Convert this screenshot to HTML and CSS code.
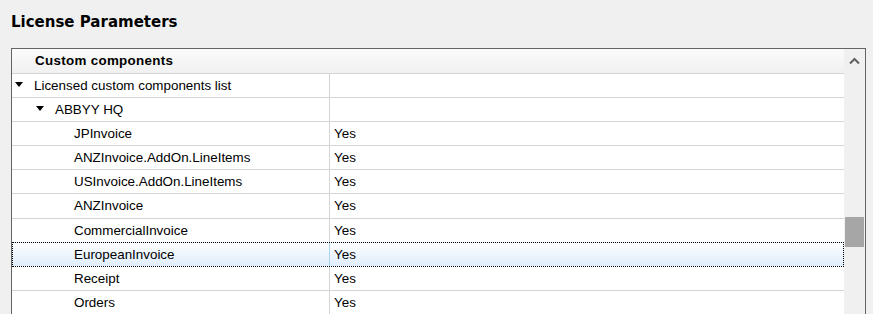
FILE: index.html
```html
<!DOCTYPE html>
<html lang="en">
<head>
  <meta charset="UTF-8" />
  <title>License Parameters</title>
  <link rel="stylesheet" href="styles.css">
</head>
<body>
  <h1>License Parameters</h1>

  <div class="grid-panel">
    <div class="rows">
      <div class="row header">Custom components</div>

      <div class="row">
        <div class="name level-0"><span class="tri"></span>Licensed custom components list</div>
        <div class="value"></div>
      </div>
      <div class="row">
        <div class="name level-1"><span class="tri"></span>ABBYY HQ</div>
        <div class="value"></div>
      </div>
      <div class="row">
        <div class="name level-2">JPInvoice</div>
        <div class="value">Yes</div>
      </div>
      <div class="row">
        <div class="name level-2">ANZInvoice.AddOn.LineItems</div>
        <div class="value">Yes</div>
      </div>
      <div class="row">
        <div class="name level-2">USInvoice.AddOn.LineItems</div>
        <div class="value">Yes</div>
      </div>
      <div class="row tall">
        <div class="name level-2">ANZInvoice</div>
        <div class="value">Yes</div>
      </div>
      <div class="row">
        <div class="name level-2">CommercialInvoice</div>
        <div class="value">Yes</div>
      </div>
      <div class="row selected">
        <div class="name level-2">EuropeanInvoice</div>
        <div class="value">Yes</div>
      </div>
      <div class="row">
        <div class="name level-2">Receipt</div>
        <div class="value">Yes</div>
      </div>
      <div class="row">
        <div class="name level-2">Orders</div>
        <div class="value">Yes</div>
      </div>
    </div>

    <div class="scrollbar">
      <div class="arrow">
        <svg width="11" height="8" viewBox="0 0 11 8">
          <polyline points="1,6.5 5.5,2 10,6.5" fill="none" stroke="#606060" stroke-width="2" />
        </svg>
      </div>
      <div class="track">
        <div class="thumb"></div>
      </div>
    </div>
  </div>
</body>
</html>
```

FILE: styles.css
```css
body {
  margin: 0;
  background-color: #f0f0f0;
  font-family: 'Liberation Sans', Arial, sans-serif;
  font-size: 13.4px;
  color: #000;
  overflow: hidden;
  height: 314px;
}

h1 {
  margin: 0;
  padding: 12px 0 0 11px;
  height: 48px;
  box-sizing: border-box;
  font-family: 'DejaVu Sans', sans-serif;
  font-size: 15px;
  font-weight: 700;
  line-height: 20px;
}

.grid-panel {
  display: flex;
  margin-left: 11px;
  width: 855px;
  height: 266px;
  box-sizing: border-box;
  border: 1px solid #646464;
  border-bottom: none;
  background-color: #fff;
}

.rows {
  width: 832px;
  display: flex;
  flex-direction: column;
}

.row {
  display: flex;
  height: 24px;
  box-sizing: border-box;
  border-bottom: 1px solid #d4d4d4;
  flex-shrink: 0;
  line-height: 23px;
}

.row.tall {
  height: 25px;
  line-height: 24px;
}

.row.header {
  height: 25px;
  line-height: 24px;
  padding-left: 23px;
  font-weight: 700;
  letter-spacing: 0.3px;
  background: linear-gradient(#fbfbfb, #f1f1f1);
}

.name {
  width: 318px;
  box-sizing: border-box;
  border-right: 1px solid #d4d4d4;
  display: flex;
  align-items: center;
  white-space: nowrap;
}

.level-0 { padding-left: 3px; }
.level-1 { padding-left: 24px; }
.level-2 { padding-left: 62px; }

.tri {
  width: 0;
  height: 0;
  border-left: 4.5px solid transparent;
  border-right: 4.5px solid transparent;
  border-top: 5px solid #000;
  margin-right: 11px;
  margin-top: -3px;
}

.value {
  flex: 1;
  padding-left: 4px;
}

.row.selected {
  margin-top: -1px;
  height: 25px;
  border: 1px dotted #000;
  background: linear-gradient(#fdfeff, #dfedfb);
  line-height: 23px;
}

.row.selected .name {
  width: 317px;
  padding-left: 61px;
  border-right-color: #a9d4f0;
}

.scrollbar {
  width: 21px;
  background-color: #f0f0f0;
  display: flex;
  flex-direction: column;
}

.arrow {
  height: 20px;
  display: flex;
  justify-content: center;
  align-items: center;
  padding-top: 2px;
}

.track {
  flex: 1;
  padding-top: 146px;
  padding-left: 1px;
}

.thumb {
  width: 19px;
  height: 30px;
  background-color: #a6a6a6;
}
```
